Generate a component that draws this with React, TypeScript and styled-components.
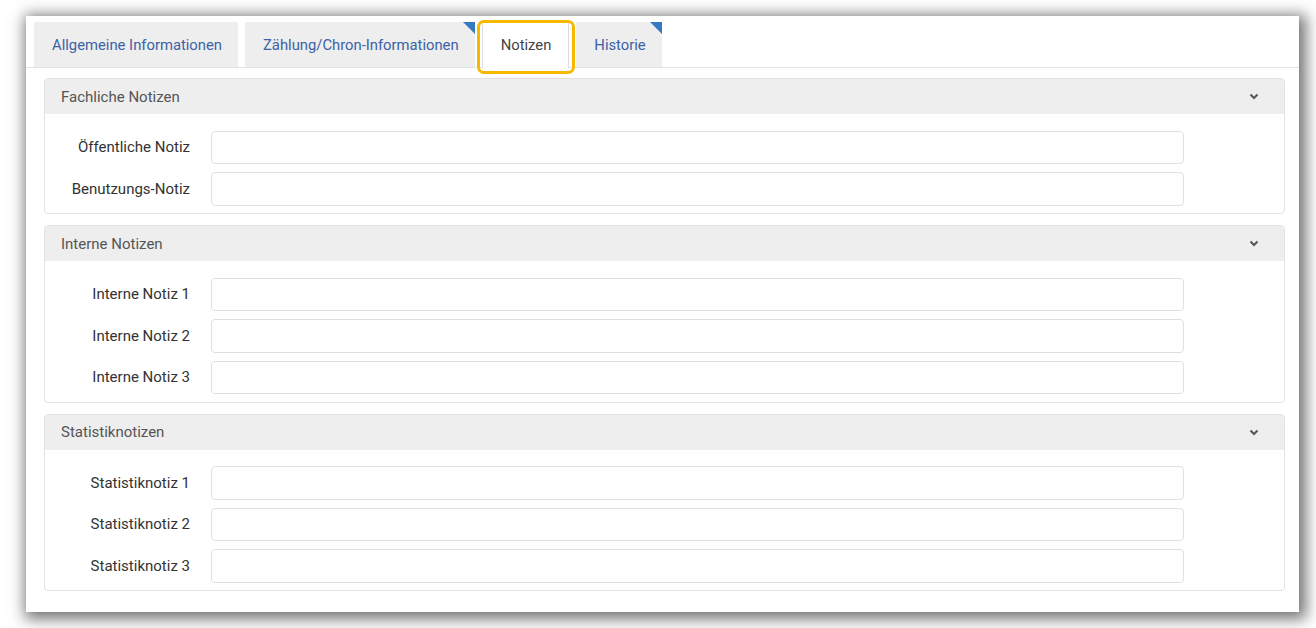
import React from 'react';
import styled, { createGlobalStyle } from 'styled-components';

const GlobalStyle = createGlobalStyle`
  html, body {
    margin: 0;
    background: #fff;
    font-family: Roboto, "Liberation Sans", Arial, sans-serif;
  }
  body {
    padding: 16px 0 16px 26px;
  }
`;

const Frame = styled.div`
  box-sizing: border-box;
  width: 1273px;
  height: 596px;
  background: #fff;
  box-shadow: 3px 3px 14px 4px rgba(0, 0, 0, 0.55);
  padding-top: 6px;
`;

const TabBar = styled.div`
  display: flex;
  align-items: flex-end;
  gap: 7px;
  padding-left: 8px;
  border-bottom: 1px solid #e4e4e4;
  height: 45px;
`;

const Tab = styled.div<{ $active?: boolean; $flag?: boolean }>`
  position: relative;
  box-sizing: border-box;
  height: ${(p) => (p.$active ? '46px' : '45px')};
  margin-bottom: ${(p) => (p.$active ? '-1px' : '0')};
  display: flex;
  align-items: center;
  padding: 0 ${(p) => (p.$active ? '17px' : '16px')} 0 18px;
  background: ${(p) => (p.$active ? '#fff' : '#eeeeee')};
  border-left: ${(p) => (p.$active ? '1px solid #dcdcdc' : 'none')};
  border-right: ${(p) => (p.$active ? '1px solid #dcdcdc' : 'none')};
  color: ${(p) => (p.$active ? '#444' : '#3b62a6')};
  font-size: 14.8px;
  white-space: nowrap;

  ${(p) =>
    p.$flag &&
    `&::after {
      content: '';
      position: absolute;
      top: 0;
      right: 0;
      border-style: solid;
      border-width: 0 12px 12px 0;
      border-color: transparent #3479c2 transparent transparent;
    }`}

  ${(p) =>
    p.$active &&
    `&::before {
      content: '';
      position: absolute;
      left: -6px;
      right: -7px;
      top: -2px;
      bottom: -6px;
      border: 3px solid #f7b900;
      border-radius: 7px;
    }`}
`;

const Content = styled.div`
  display: flex;
  flex-direction: column;
  gap: 11px;
  padding: 10px 14px 0 18px;
`;

const Panel = styled.section`
  border: 1px solid #e2e2e2;
  border-radius: 4px;
  overflow: hidden;
`;

const PanelHeader = styled.div`
  height: 35px;
  background: #eeeeee;
  display: flex;
  align-items: center;
  justify-content: space-between;
  padding: 0 25px 0 16px;
  color: #555;
  font-size: 15px;
`;

const PanelBody = styled.div`
  display: grid;
  grid-template-columns: 166px 973px;
  row-gap: 8px;
  align-items: center;
  padding: 16.5px 0 7.5px;
`;

const Label = styled.label`
  text-align: right;
  padding-right: 21px;
  color: #333;
  font-size: 15px;
`;

const Input = styled.input`
  box-sizing: border-box;
  height: 33.5px;
  width: 100%;
  border: 1px solid #dde1e6;
  border-radius: 4px;
  background: #fff;
  outline: none;
`;

const Chevron = () => (
  <svg width="10" height="7" viewBox="0 0 10 7">
    <path d="M1.5 1.5 L5 5 L8.5 1.5" fill="none" stroke="#555" strokeWidth="2" />
  </svg>
);

const panels = [
  { title: 'Fachliche Notizen', fields: ['Öffentliche Notiz', 'Benutzungs-Notiz'] },
  { title: 'Interne Notizen', fields: ['Interne Notiz 1', 'Interne Notiz 2', 'Interne Notiz 3'] },
  { title: 'Statistiknotizen', fields: ['Statistiknotiz 1', 'Statistiknotiz 2', 'Statistiknotiz 3'] },
];

const App: React.FC = () => (
  <>
    <GlobalStyle />
    <Frame>
      <TabBar>
        <Tab>Allgemeine Informationen</Tab>
        <Tab $flag>Zählung/Chron-Informationen</Tab>
        <Tab $active>Notizen</Tab>
        <Tab $flag>Historie</Tab>
      </TabBar>
      <Content>
        {panels.map((panel) => (
          <Panel key={panel.title}>
            <PanelHeader>
              {panel.title}
              <Chevron />
            </PanelHeader>
            <PanelBody>
              {panel.fields.map((field) => (
                <React.Fragment key={field}>
                  <Label>{field}</Label>
                  <Input />
                </React.Fragment>
              ))}
            </PanelBody>
          </Panel>
        ))}
      </Content>
    </Frame>
  </>
);

export default App;
